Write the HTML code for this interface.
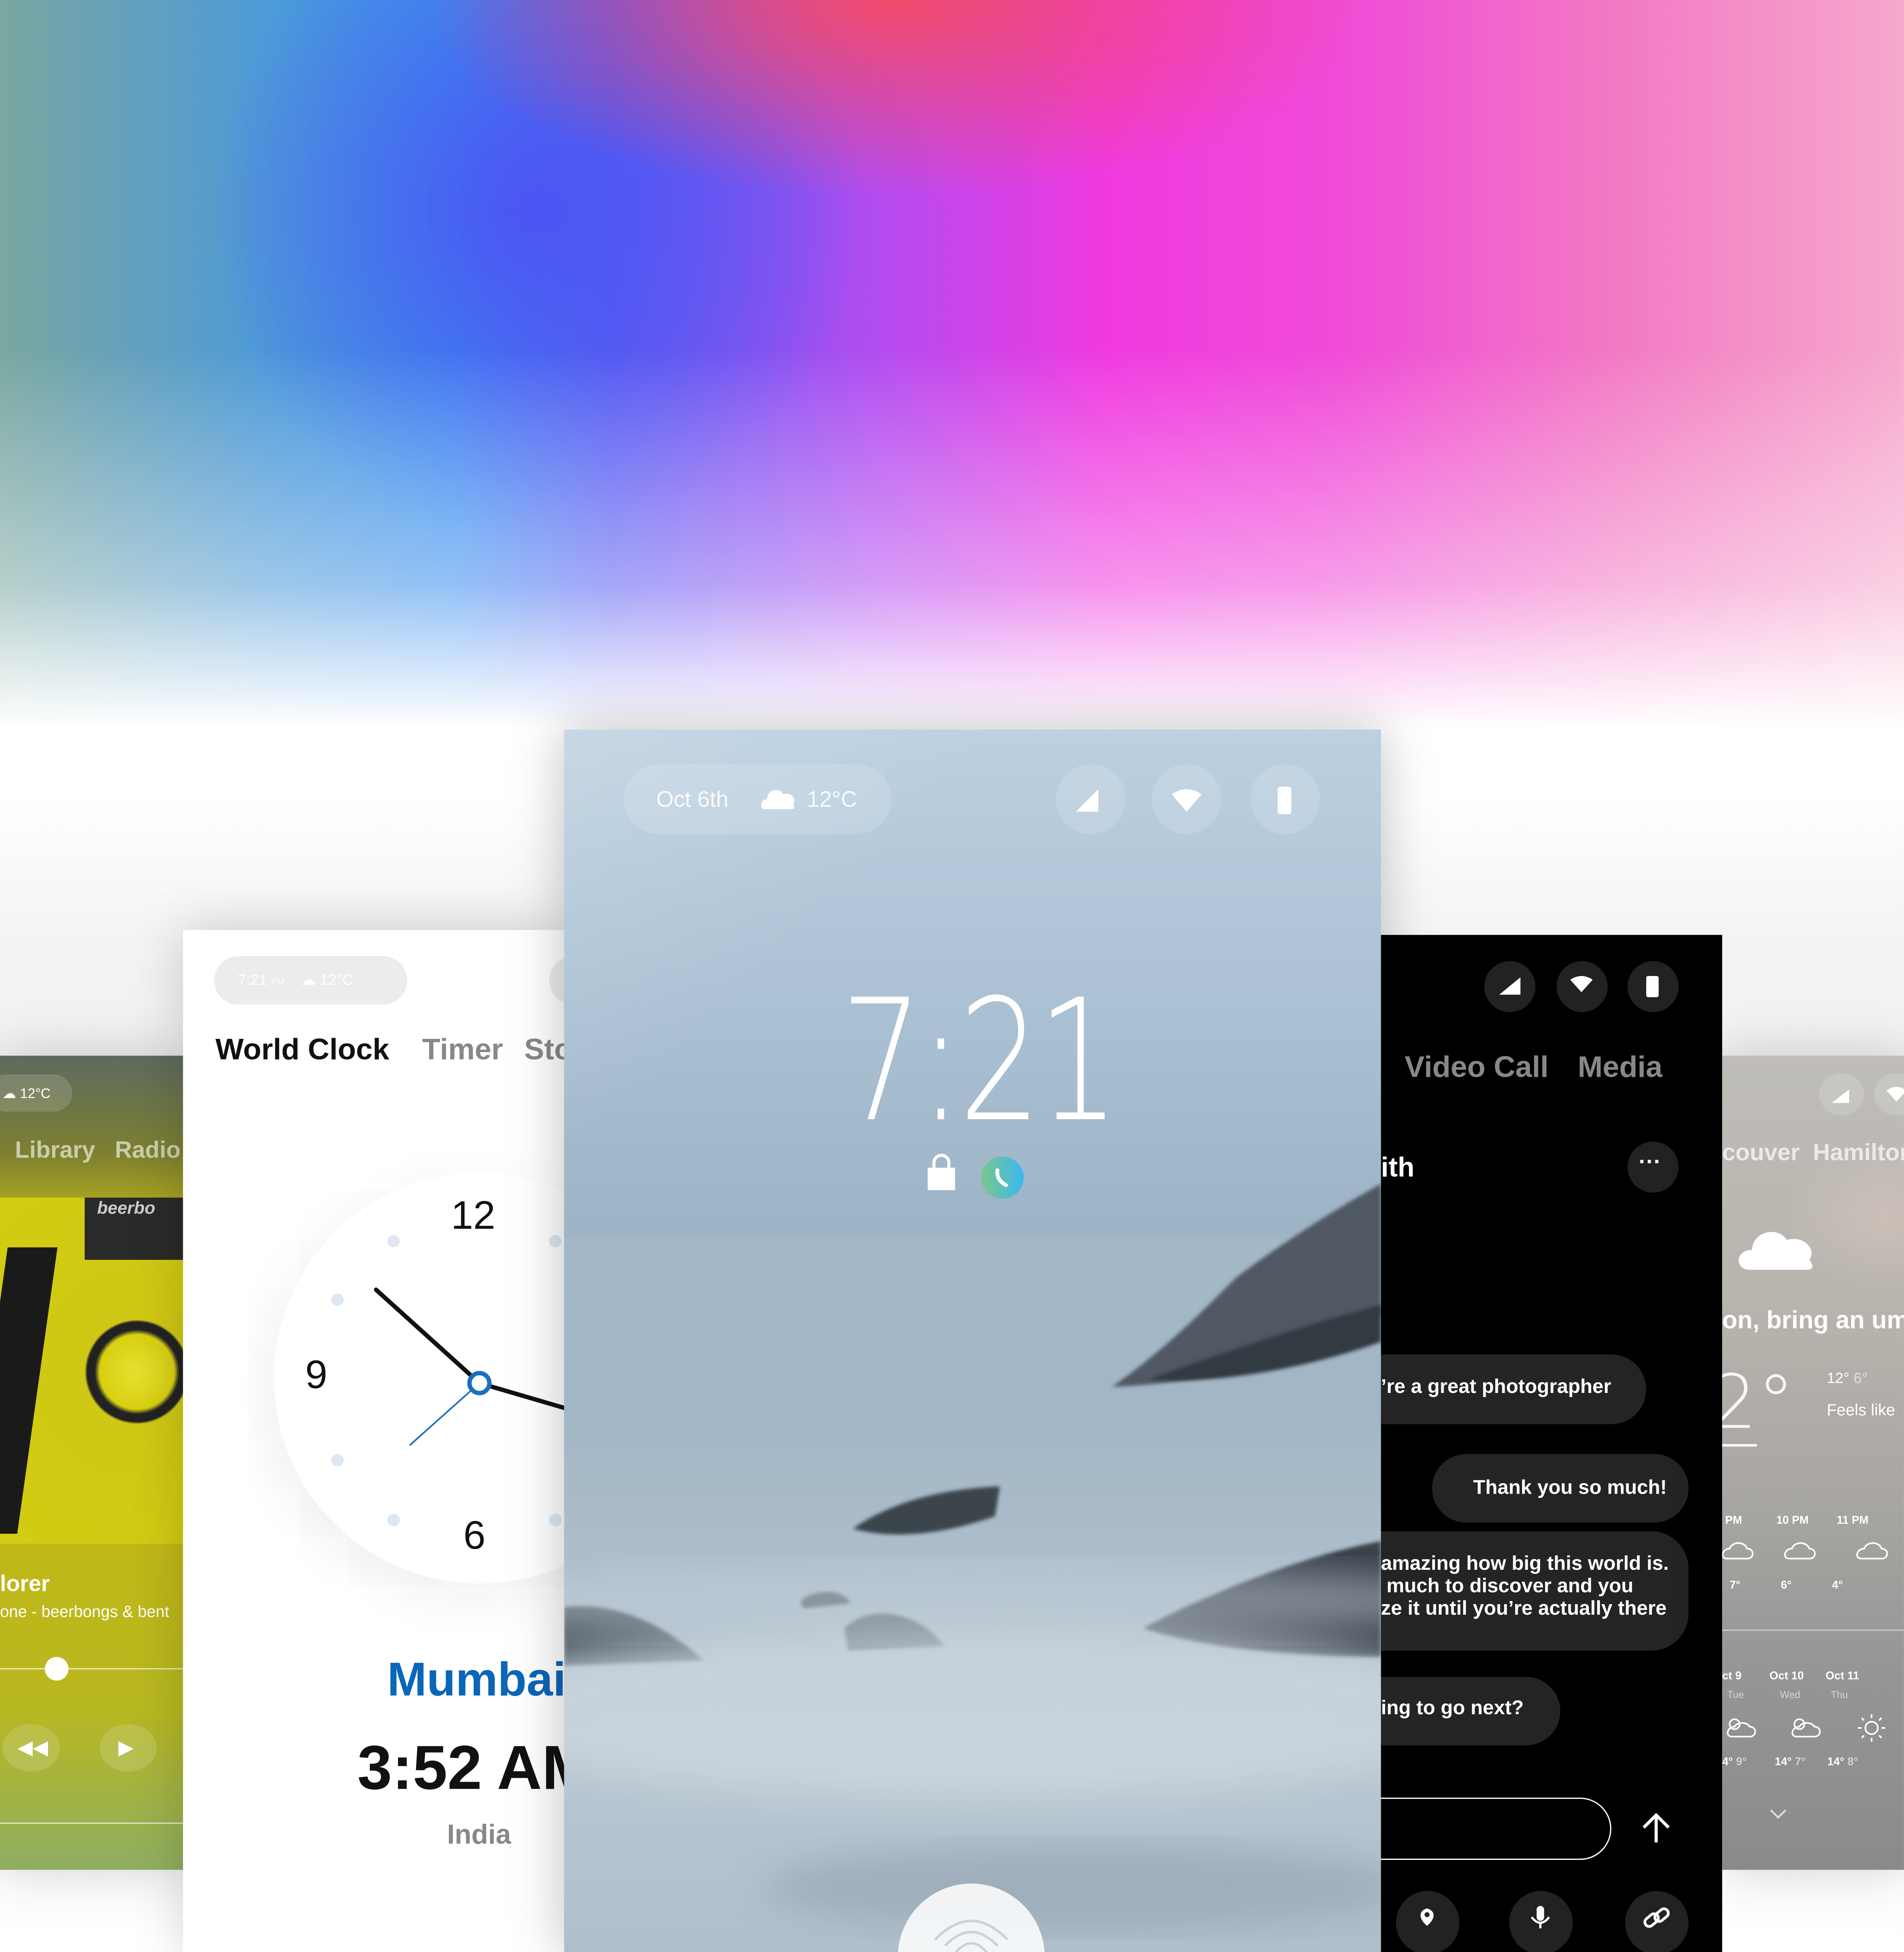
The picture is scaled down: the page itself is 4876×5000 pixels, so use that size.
<!DOCTYPE html>
<html><head><meta charset="utf-8">
<style>
html,body{margin:0;padding:0;width:4876px;height:5000px;overflow:hidden;background:#fff;}
#w{position:absolute;left:0;top:0;width:1529px;height:1568px;transform:scale(3.18896,3.18878);transform-origin:0 0;overflow:hidden;font-family:"Liberation Sans",sans-serif;background:#fff}
.abs{position:absolute}
.bg{left:0;top:0;width:1529px;height:1568px;
background:
linear-gradient(to bottom,rgba(255,255,255,0) 0px,rgba(255,255,255,0) 280px,rgba(255,255,255,.45) 470px,#fff 585px,#fff 640px,#f3f3f3 760px,#f0f0f0 900px,#fff 1568px),
radial-gradient(ellipse 380px 160px at 720px 0px,#f24a6a,rgba(242,74,106,0)),
radial-gradient(ellipse 260px 260px at 430px 170px,#4b55f2,rgba(75,85,242,0)),
linear-gradient(to right,#7aa7a0 0%,#4d9ad8 14%,#3a8ff0 24%,#5a5ef2 32%,#b24cf0 46%,#f03ae0 58%,#f04ad8 70%,#f27ac4 85%,#f6a8cc 100%);}
.panel{position:absolute;overflow:hidden;box-shadow:0 0 60px rgba(0,0,0,.18)}
.c{position:absolute;border-radius:50%}
.t{position:absolute;white-space:nowrap}
</style></head><body><div id="w">
<div class="abs bg"></div>

<!-- Music panel -->
<div class="panel" style="left:0;top:848px;width:147px;height:654px;background:linear-gradient(to bottom,#5d6a60 0%,#7d8030 12%,#a8a420 18%,#c0b818 60%,#b8b820 80%,#8fae62 100%)">
  <div class="abs" style="left:-10px;top:15px;width:68px;height:30px;border-radius:15px;background:rgba(255,255,255,.15)"></div>
  <div class="t" style="left:2px;top:24px;font-size:11px;color:#fff">☁ 12°C</div>
  <div class="t" style="left:12px;top:66px;font-size:19px;font-weight:bold;color:rgba(255,255,255,.6)">Library&nbsp;&nbsp;&nbsp;Radio</div>
  <div class="abs" style="left:0;top:114px;width:147px;height:278px;background:radial-gradient(circle at 110px 140px,#e8e030 0,#d8d010 30px,#222 34px,#222 40px,#cfc814 42px,#d4cc12 100%)">
    <div class="abs" style="left:68px;top:0;width:79px;height:50px;background:#2a2a28"></div>
    <div class="t" style="left:78px;top:0;font-size:14px;font-style:italic;font-weight:bold;color:#ccc">beerbo</div>
    <div class="abs" style="left:-10px;top:40px;width:40px;height:230px;background:#1a1a18;transform:skewX(-8deg)"></div>
  </div>
  <div class="t" style="left:0;top:414px;font-size:18px;font-weight:bold;color:#fff">lorer</div>
  <div class="t" style="left:0;top:439px;font-size:13px;color:#fff">one - beerbongs &amp; bent</div>
  <div class="abs" style="left:0;top:492px;width:147px;height:1px;background:rgba(255,255,255,.7)"></div>
  <div class="c" style="left:36px;top:483px;width:19px;height:19px;background:#fff"></div>
  <div class="c" style="left:2px;top:537px;width:46px;height:38px;background:rgba(255,255,255,.15)"></div>
  <div class="t" style="left:14px;top:546px;font-size:16px;color:#fff">◀◀</div>
  <div class="c" style="left:80px;top:537px;width:46px;height:38px;background:rgba(255,255,255,.15)"></div>
  <div class="t" style="left:95px;top:546px;font-size:16px;color:#fff">▶</div>
  <div class="abs" style="left:0;top:616px;width:147px;height:1px;background:rgba(255,255,255,.7)"></div>
</div>

<!-- Clock panel -->
<div class="panel" style="left:147px;top:747px;width:306px;height:821px;background:#fff">
  <div class="abs" style="left:25px;top:21px;width:155px;height:39px;border-radius:20px;background:#ececec"></div>
  <div class="t" style="left:44px;top:33px;font-size:12px;color:#fff">7:21 <span style="font-size:7px">PM</span>&nbsp;&nbsp;&nbsp;&nbsp;☁ 12°C</div>
  <div class="c" style="left:294px;top:21px;width:39px;height:39px;background:#ececec"></div>
  <div class="t" style="left:26px;top:83px;font-size:24px;font-weight:bold;color:#111">World Clock</div>
  <div class="t" style="left:192px;top:83px;font-size:24px;font-weight:bold;color:#888">Timer</div>
  <div class="t" style="left:274px;top:83px;font-size:24px;font-weight:bold;color:#888">Sto</div>
  <div class="c" style="left:73px;top:195px;width:330px;height:330px;background:#fff;box-shadow:-6px 10px 40px rgba(0,0,0,.08)"></div>
  <svg class="abs" style="left:0;top:0" width="306" height="821">
    <g fill="#dde8f2">
      <circle cx="169" cy="250" r="5"/><circle cx="124" cy="297" r="5"/><circle cx="124" cy="426" r="5"/><circle cx="169" cy="474" r="5"/><circle cx="299" cy="250" r="5"/><circle cx="299" cy="474" r="5"/>
    </g>
    <text x="233" y="240" font-size="32" text-anchor="middle" fill="#111" font-family="Liberation Sans">12</text>
    <text x="107" y="368" font-size="32" text-anchor="middle" fill="#111" font-family="Liberation Sans">9</text>
    <text x="234" y="497" font-size="32" text-anchor="middle" fill="#111" font-family="Liberation Sans">6</text>
    <line x1="238" y1="364" x2="155" y2="289" stroke="#111" stroke-width="3.5" stroke-linecap="round"/>
    <line x1="238" y1="364" x2="320" y2="388" stroke="#111" stroke-width="3.5"/>
    <line x1="238" y1="364" x2="182" y2="414" stroke="#1a6fc0" stroke-width="1.3"/>
    <circle cx="238" cy="364" r="8" fill="#fff" stroke="#1a6fc0" stroke-width="3.5"/>
  </svg>
  <div class="t" style="left:164px;top:582px;font-size:38px;font-weight:bold;color:#0a66b8">Mumbai</div>
  <div class="t" style="left:140px;top:644px;font-size:50px;font-weight:bold;color:#111">3:52 AM</div>
  <div class="t" style="left:212px;top:714px;font-size:22px;font-weight:bold;color:#888">India</div>
</div>

<!-- Lock screen -->
<div class="panel" style="left:453px;top:586px;width:656px;height:982px;background:linear-gradient(to bottom,#bcd0e0 0%,#a9bfd2 25%,#9db4c6 41%,#a4b8c8 42%,#a3b6c5 55%,#aebfcc 70%,#b8c6d1 85%,#aebfcb 100%);box-shadow:0 0 80px rgba(0,0,0,.25)">
  <div class="abs" style="left:-100px;top:-80px;width:500px;height:400px;background:linear-gradient(135deg,rgba(255,255,255,.25),rgba(255,255,255,0) 60%)"></div>
  <svg class="abs" style="left:0;top:0" width="656" height="982">
    <defs><filter id="bl"><feGaussianBlur stdDeviation="1.5"/></filter><filter id="bl2"><feGaussianBlur stdDeviation="14"/></filter></defs>
    <path d="M440 528 C480 500 510 470 540 440 C580 410 620 385 656 365 L656 470 C600 505 520 525 440 528 Z" fill="#4f5964" filter="url(#bl)"/>
    <path d="M470 522 C530 500 590 480 656 462 L656 492 C590 515 520 526 470 522Z" fill="#323a42" filter="url(#bl)"/>
    <path d="M232 642 C260 622 300 610 350 608 L346 632 C300 648 262 650 232 642Z" fill="#3b444c" filter="url(#bl)"/>
    <path d="M0 705 C40 700 80 718 112 748 L0 752Z" fill="#3e474f" filter="url(#bl)" opacity=".85"/>
    <path d="M225 722 C245 702 285 708 305 736 L228 740Z" fill="#3e474f" filter="url(#bl)" opacity=".85"/>
    <path d="M190 700 C200 690 225 690 230 702 L192 706Z" fill="#3e474f" filter="url(#bl)" opacity=".8"/>
    <path d="M465 722 C520 692 600 662 656 652 L656 745 C600 745 520 740 465 722Z" fill="#3a434b" filter="url(#bl)"/>
    <ellipse cx="330" cy="790" rx="420" ry="70" fill="#cdd7de" opacity=".75" filter="url(#bl2)"/>
    <ellipse cx="320" cy="700" rx="420" ry="30" fill="#c3cfd8" opacity=".5" filter="url(#bl2)"/>
    <ellipse cx="420" cy="930" rx="260" ry="35" fill="#8d9ca8" opacity=".5" filter="url(#bl2)"/>
  </svg>
  <div class="abs" style="left:48px;top:28px;width:215px;height:56px;border-radius:28px;background:rgba(255,255,255,.15)"></div>
  <div class="t" style="left:74px;top:46px;font-size:18px;color:#fff;opacity:.9">Oct 6th</div>
  <svg class="abs" style="left:157px;top:44px" width="30" height="22"><path d="M4 20 C0 20 0 12 6 12 C6 4 16 2 19 8 C26 6 30 12 27 16 C29 20 27 20 25 20Z" fill="#fff"/></svg>
  <div class="t" style="left:195px;top:46px;font-size:18px;color:#fff;opacity:.9">12°C</div>
  <div class="c" style="left:395px;top:28px;width:56px;height:56px;background:rgba(255,255,255,.15)"></div>
  <div class="c" style="left:472px;top:28px;width:56px;height:56px;background:rgba(255,255,255,.15)"></div>
  <div class="c" style="left:551px;top:28px;width:56px;height:56px;background:rgba(255,255,255,.15)"></div>
  <svg class="abs" style="left:0;top:0" width="656" height="120">
    <path d="M411 66 L429 66 L429 48 Z" fill="#fff"/>
    <path d="M488 52 Q500 44 512 52 L500 66 Z" fill="#fff"/>
    <rect x="573" y="46" width="11" height="22" rx="2" fill="#fff"/>
  </svg>
  <div class="t" style="left:222px;top:199px;font-size:135px;line-height:135px;color:#fff;font-family:'DejaVu Sans','Liberation Sans',sans-serif;font-weight:200;letter-spacing:-4px;transform:scaleX(.77);transform-origin:0 0">7:21</div>
  <svg class="abs" style="left:290px;top:340px" width="80" height="40">
    <rect x="2" y="12" width="22" height="18" fill="#fff"/><path d="M7 12 V8 A6 6 0 0 1 19 8 V12" stroke="#fff" stroke-width="2.5" fill="none"/>
    <defs><linearGradient id="g1" x1="0" x2="1"><stop offset="0" stop-color="#7cc68c"/><stop offset="1" stop-color="#3ab8f0"/></linearGradient></defs>
    <circle cx="62" cy="20" r="17" fill="url(#g1)"/>
    <path d="M58 14 Q57 22 65 26" stroke="#fff" stroke-width="3" fill="none" stroke-linecap="round"/>
  </svg>
  <div class="c" style="left:268px;top:927px;width:118px;height:118px;background:rgba(255,255,255,.85)"></div>
  <svg class="abs" style="left:268px;top:927px" width="118" height="60"><g fill="none" stroke="#c8d2da" stroke-width="2"><path d="M30 45 Q59 15 88 45"/><path d="M38 50 Q59 28 80 50"/><path d="M46 56 Q59 40 72 56"/></g></svg>
</div>

<!-- Chat panel -->
<div class="panel" style="left:1109px;top:751px;width:274px;height:817px;background:#000;box-shadow:none">
  <div class="c" style="left:83px;top:21px;width:41px;height:41px;background:#222"></div>
  <div class="c" style="left:141px;top:21px;width:41px;height:41px;background:#222"></div>
  <div class="c" style="left:198px;top:21px;width:41px;height:41px;background:#222"></div>
  <svg class="abs" style="left:0;top:0" width="274" height="70"><path d="M95 48 L112 48 L112 34Z" fill="#fff"/><path d="M152 36 Q161 30 170 36 L161 46Z" fill="#fff"/><rect x="213" y="33" width="10" height="17" rx="1.5" fill="#fff"/></svg>
  <div class="t" style="left:19px;top:93px;font-size:24px;font-weight:bold;color:#888">Video Call</div>
  <div class="t" style="left:158px;top:93px;font-size:24px;font-weight:bold;color:#888">Media</div>
  <div class="t" style="left:0;top:174px;font-size:22px;font-weight:bold;color:#fff">ith</div>
  <div class="c" style="left:198px;top:166px;width:41px;height:41px;background:#222"></div>
  <div class="t" style="left:207px;top:172px;font-size:18px;font-weight:bold;color:#fff">···</div>
  <div class="abs" style="left:-40px;top:337px;width:253px;height:56px;border-radius:28px;background:#242424"></div>
  <div class="t" style="left:0;top:355px;font-size:16px;font-weight:bold;color:#fff">’re a great photographer</div>
  <div class="abs" style="left:41px;top:417px;width:206px;height:55px;border-radius:28px;background:#242424"></div>
  <div class="t" style="left:74px;top:436px;font-size:16px;font-weight:bold;color:#fff">Thank you so much!</div>
  <div class="abs" style="left:-40px;top:479px;width:287px;height:96px;border-radius:30px;background:#242424"></div>
  <div class="t" style="left:0;top:497px;font-size:16px;font-weight:bold;color:#fff;line-height:18px">amazing how big this world is.<br>&nbsp;much to discover and you<br>ze it until you’re actually there</div>
  <div class="abs" style="left:-40px;top:596px;width:184px;height:55px;border-radius:28px;background:#242424"></div>
  <div class="t" style="left:0;top:613px;font-size:16px;font-weight:bold;color:#fff">ing to go next?</div>
  <div class="abs" style="left:-60px;top:693px;width:243px;height:48px;border-radius:25px;border:1.5px solid #fff"></div>
  <svg class="abs" style="left:205px;top:703px" width="30" height="30"><path d="M16 26 V5 M6 14 L16 4 L26 14" stroke="#fff" stroke-width="2.5" fill="none"/></svg>
  <div class="c" style="left:12px;top:768px;width:51px;height:51px;background:#222"></div>
  <div class="c" style="left:103px;top:768px;width:51px;height:51px;background:#222"></div>
  <div class="c" style="left:196px;top:768px;width:51px;height:51px;background:#222"></div>
  <svg class="abs" style="left:0;top:768px" width="274" height="50"><path d="M37 28 C30 22 30 16 37 14 C44 16 44 22 37 28Z" fill="#fff"/><circle cx="37" cy="19" r="2" fill="#222"/><rect x="125" y="12" width="6" height="12" rx="3" fill="#fff"/><path d="M121 21 Q128 30 135 21 M128 26 V30" stroke="#fff" stroke-width="1.8" fill="none"/><g stroke="#fff" stroke-width="2.2" fill="none"><rect x="211" y="20" width="12" height="7" rx="3.5" transform="rotate(-40 217 23)"/><rect x="219" y="16" width="12" height="7" rx="3.5" transform="rotate(-40 225 19)"/></g></svg>
</div>

<!-- Weather panel -->
<div class="panel" style="left:1383px;top:848px;width:146px;height:654px;background:radial-gradient(ellipse 80px 60px at 130px 130px,rgba(220,200,190,.5),rgba(0,0,0,0)),linear-gradient(to bottom,#bfbdb8 0%,#b8b4ae 30%,#a8a6a2 55%,#969696 75%,#8a8a8a 100%)">
  <div class="c" style="left:78px;top:14px;width:36px;height:34px;background:rgba(255,255,255,.15)"></div>
  <div class="c" style="left:122px;top:14px;width:36px;height:34px;background:rgba(255,255,255,.15)"></div>
  <svg class="abs" style="left:0;top:0" width="146" height="60"><path d="M88 38 L102 38 L102 27Z" fill="#fff"/><path d="M132 28 Q140 22 148 28 L140 37Z" fill="#fff"/></svg>
  <div class="t" style="left:0;top:68px;font-size:19px;font-weight:bold;color:rgba(255,255,255,.7)">couver&nbsp;&nbsp;Hamilton</div>
  <svg class="abs" style="left:10px;top:128px" width="70" height="50"><path d="M12 44 C0 44 0 28 14 28 C14 14 34 8 42 20 C56 16 66 28 60 36 C66 44 60 44 56 44Z" fill="#fff"/></svg>
  <div class="t" style="left:0;top:202px;font-size:20px;font-weight:bold;color:#fff">on, bring an umb</div>
  <div class="t" style="left:-10px;top:244px;font-size:60px;color:#fff;opacity:.9;font-family:'DejaVu Sans','Liberation Sans',sans-serif;font-weight:200">2°</div>
  <div class="abs" style="left:0;top:312px;width:28px;height:2px;background:#fff"></div>
  <div class="t" style="left:84px;top:252px;font-size:12px;color:#fff">12° <span style="opacity:.6">6°</span></div>
  <div class="t" style="left:84px;top:277px;font-size:13px;color:#fff">Feels like</div>
  <div class="t" style="left:0;top:368px;font-size:9px;font-weight:bold;color:#fff;word-spacing:0">&nbsp;PM&nbsp;&nbsp;&nbsp;&nbsp;&nbsp;&nbsp;&nbsp;&nbsp;&nbsp;&nbsp;&nbsp;10 PM&nbsp;&nbsp;&nbsp;&nbsp;&nbsp;&nbsp;&nbsp;&nbsp;&nbsp;11 PM</div>
  <svg class="abs" style="left:0;top:386px" width="146" height="30" fill="none" stroke="#fff" stroke-width="1.3"><path d="M4 18 C-2 18 0 10 6 10 C8 4 18 4 20 10 C26 10 26 18 20 18Z"/><path d="M54 18 C48 18 50 10 56 10 C58 4 68 4 70 10 C76 10 76 18 70 18Z"/><path d="M112 18 C106 18 108 10 114 10 C116 4 126 4 128 10 C134 10 134 18 128 18Z"/></svg>
  <div class="t" style="left:6px;top:420px;font-size:9px;font-weight:bold;color:#fff">7°&nbsp;&nbsp;&nbsp;&nbsp;&nbsp;&nbsp;&nbsp;&nbsp;&nbsp;&nbsp;&nbsp;&nbsp;&nbsp;6°&nbsp;&nbsp;&nbsp;&nbsp;&nbsp;&nbsp;&nbsp;&nbsp;&nbsp;&nbsp;&nbsp;&nbsp;&nbsp;4°</div>
  <div class="abs" style="left:0;top:461px;width:146px;height:1px;background:rgba(255,255,255,.5)"></div>
  <div class="t" style="left:0;top:493px;font-size:9px;font-weight:bold;color:#fff">ct 9&nbsp;&nbsp;&nbsp;&nbsp;&nbsp;&nbsp;&nbsp;&nbsp;&nbsp;Oct 10&nbsp;&nbsp;&nbsp;&nbsp;&nbsp;&nbsp;&nbsp;Oct 11</div>
  <div class="t" style="left:4px;top:509px;font-size:8px;color:rgba(255,255,255,.6)">Tue&nbsp;&nbsp;&nbsp;&nbsp;&nbsp;&nbsp;&nbsp;&nbsp;&nbsp;&nbsp;&nbsp;&nbsp;&nbsp;Wed&nbsp;&nbsp;&nbsp;&nbsp;&nbsp;&nbsp;&nbsp;&nbsp;&nbsp;&nbsp;&nbsp;Thu</div>
  <svg class="abs" style="left:0;top:525px" width="146" height="30" fill="none" stroke="#fff" stroke-width="1.3"><circle cx="10" cy="12" r="4"/><path d="M8 22 C2 22 4 14 10 14 C12 10 20 10 22 14 C28 14 28 22 22 22Z"/><circle cx="62" cy="12" r="4"/><path d="M60 22 C54 22 56 14 62 14 C64 10 72 10 74 14 C80 14 80 22 74 22Z"/><circle cx="120" cy="15" r="5"/><path d="M120 4 V7 M120 23 V26 M109 15 H112 M128 15 H131 M112 7 L114 9 M126 21 L128 23 M112 23 L114 21 M126 9 L128 7"/></svg>
  <div class="t" style="left:0;top:562px;font-size:9px;font-weight:bold;color:#fff">4° <span style="opacity:.6">9°</span>&nbsp;&nbsp;&nbsp;&nbsp;&nbsp;&nbsp;&nbsp;&nbsp;&nbsp;14° <span style="opacity:.6">7°</span>&nbsp;&nbsp;&nbsp;&nbsp;&nbsp;&nbsp;&nbsp;14° <span style="opacity:.6">8°</span></div>
  <svg class="abs" style="left:38px;top:604px" width="14" height="10"><path d="M1 2 L7 8 L13 2" stroke="#ddd" stroke-width="1.5" fill="none"/></svg>
</div>

</div></body></html>
